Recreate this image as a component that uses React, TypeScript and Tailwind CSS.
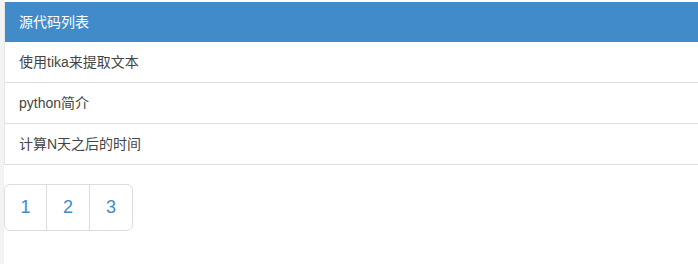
const posts = ['使用tika来提取文本', 'python简介', '计算N天之后的时间']

export default function App() {
  return (
    <div
      className="flex min-h-[264px] bg-white text-[14px] text-[#444]"
      style={{ fontFamily: '"Liberation Sans", Arial, "Noto Sans CJK SC", sans-serif' }}
    >
      <div className="w-[4px] shrink-0 bg-[#f3f3f3]" />
      <div className="flex-1 pt-[2px]">
        {/* Panel */}
        <div className="border-l border-[#e6e6e6]">
          <div className="bg-[#428bca] px-[14px] py-[10px] leading-[20px] text-white">源代码列表</div>
          {posts.map(p => (
            <div key={p} className="border-b border-[#ddd] px-[14px] py-[10px] leading-[20px]">
              {p}
            </div>
          ))}
        </div>

        {/* Pagination */}
        <div className="mt-[19px] flex">
          <a href="#" className="flex h-[47px] w-[43px] items-center justify-center rounded-l-[6px] border border-[#ddd] text-[18px] text-[#428bca]">
            1
          </a>
          <a href="#" className="-ml-px flex h-[47px] w-[44px] items-center justify-center border border-[#ddd] text-[18px] text-[#428bca]">
            2
          </a>
          <a href="#" className="-ml-px flex h-[47px] w-[44px] items-center justify-center rounded-r-[6px] border border-[#ddd] text-[18px] text-[#428bca]">
            3
          </a>
        </div>
      </div>
    </div>
  )
}
